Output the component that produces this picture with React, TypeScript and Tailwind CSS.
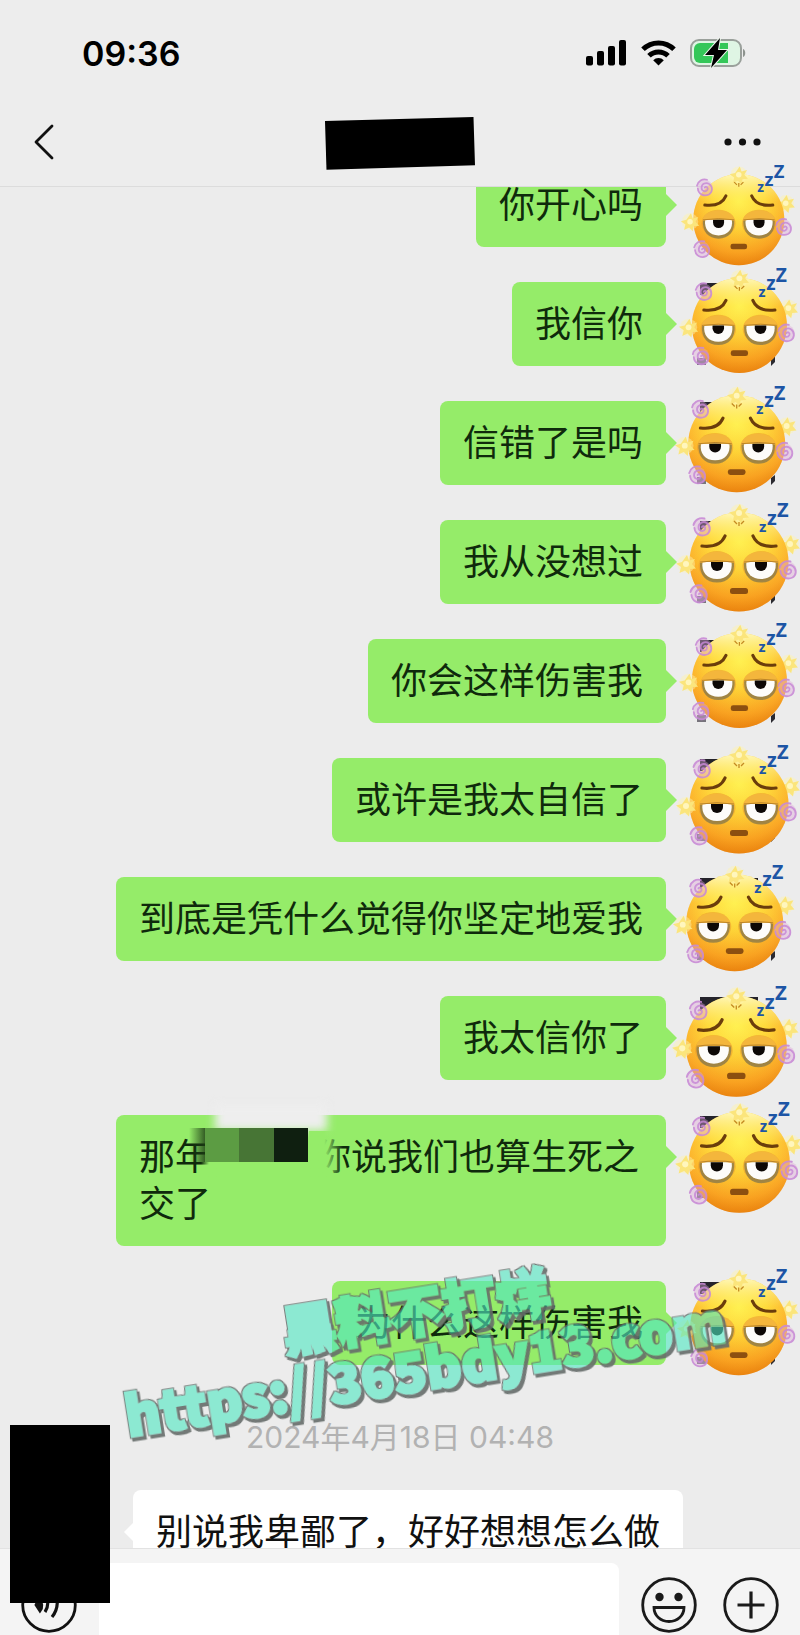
import React from "react";

type Message = { text: React.ReactNode; scrap: "none" | "corner" | "wide" };

const messages: Message[] = [
  { text: "你开心吗", scrap: "none" },
  { text: "我信你", scrap: "corner" },
  { text: "信错了是吗", scrap: "corner" },
  { text: "我从没想过", scrap: "corner" },
  { text: "你会这样伤害我", scrap: "corner" },
  { text: "或许是我太自信了", scrap: "corner" },
  { text: "到底是凭什么觉得你坚定地爱我", scrap: "wide" },
  { text: "我太信你了", scrap: "wide" },
  {
    text: (
      <>
        那年
        <Mosaic />
        你说我们也算生死之交了
      </>
    ),
    scrap: "corner",
  },
  { text: "为什么这样伤害我", scrap: "corner" },
];

// Centre (from the right and top edges) and face radius of each pasted sticker.
const stickers = [
  { right: 61, y: 220, r: 46 },
  { right: 61, y: 325, r: 48 },
  { right: 63, y: 444, r: 49 },
  { right: 61, y: 562, r: 50 },
  { right: 61, y: 680, r: 48 },
  { right: 61, y: 804, r: 50 },
  { right: 65, y: 923, r: 49 },
  { right: 64, y: 1046, r: 51 },
  { right: 61, y: 1162, r: 51 },
  { right: 61, y: 1327, r: 49 },
];

function Mosaic() {
  return (
    <span className="relative inline-block h-[34px] w-[104px] align-middle">
      <span className="absolute -top-[38px] left-[4px] h-[26px] w-[112px] bg-[#eeeeee] blur-[5px]" />
      <span className="absolute -left-[22px] -top-[15px] h-[34px] w-[16px] bg-linear-to-r from-transparent to-[#1c3a14]/80" />
      <span className="absolute -left-[10px] top-[19px] h-[16px] w-[16px] bg-linear-to-r from-transparent to-[#95ec69] to-50%" />
      <span className="absolute -left-[6px] -top-[15px] flex h-[34px] w-[103px]">
        <span className="flex-1 bg-[#5c9c43]" />
        <span className="flex-1 bg-[#477535]" />
        <span className="flex-1 bg-[#0f1f10]" />
      </span>
      <span className="absolute left-[98px] -top-[12px] h-[46px] w-[34px] bg-linear-to-r from-[#95ec69] from-45% to-transparent" />
    </span>
  );
}

function Spiral({ x, y }: { x: number; y: number }) {
  return (
    <g transform={`translate(${x} ${y})`} fill="none" stroke="#c98bd6" strokeWidth="1.9" strokeLinecap="round" opacity=".9">
      <circle r="8.500" fill="#dda9d8" fillOpacity=".45" stroke="none" />
      <path d="M0 0c1.500-2 4 0 3 2.200c-1.500 3-6.500 2-6.500-2c0-4.500 5-6.500 8.500-4c4 3 3.500 9-.5 11.300c-5 2.500-11.500 0-12-6.500" />
      <path d="M-8.500-2c1-5 6-8 11-6.500" />
    </g>
  );
}

function Star({ x, y }: { x: number; y: number }) {
  return (
    <g transform={`translate(${x} ${y})`}>
      <circle r="9" fill="#fff3b0" opacity=".45" />
      <path d="M1-9l2 5.500 6-1.500-3 5 4 4.500-6 .5-1 5.500-4-4-5.500 2.500 1.500-6-5-3.500 6-1.500z" fill="#fbe57c" />
      <circle r="3" fill="#fff6bd" />
    </g>
  );
}

function Eye({ x }: { x: number }) {
  return (
    <g transform={`translate(${x} 0)`}>
      <ellipse cy="4" rx="18.500" ry="15" fill="#e8962a" opacity=".5" />
      <path d="M-17 0h34c1 13-6 20.500-17 20.500S-18 13-17 0z" fill="#8b7a4a" opacity=".8" />
      <path d="M-14.500 0h29c1.500 10-4.500 17-14.500 17S-16 10-14.500 0z" fill="#fdfcfa" />
      <path d="M-6 0H6v3A6 6 0 0 1-6 3z" fill="#0d0806" />
      <path d="M-17.500 1C-16-14 16-14 17.500 1Q0-2.500-17.500 1z" fill="#f4b63c" />
      <path d="M-17 0Q0-2.500 17 0" stroke="#b98228" strokeWidth="1" fill="none" />
    </g>
  );
}

function TiredFace() {
  return (
    <svg viewBox="-65 -65 130 130" className="block size-full" aria-hidden="true">
      <Star x={51} y={-18} />
      <circle r="49.500" fill="url(#face)" />
      <circle r="49.500" fill="url(#shine)" />
      <Star x={0} y={-49} />
      <path d="M-5-41l3 3M5-41l-3 3M0-40v4" stroke="#c48a22" strokeWidth="1.300" />
      <Star x={-53} y={2} />
      <Spiral x={-37} y={-35} />
      <Spiral x={-40} y={32} />
      <Spiral x={49} y={8} />
      <path d="M-37-16Q-19-14-14-26M14-26Q19-14 37-16" fill="none" stroke="#6b3d0c" strokeWidth="3.200" strokeLinecap="round" />
      <Eye x={-22} />
      <Eye x={22} />
      <rect x="-9" y="26" width="18" height="6" rx="2.500" fill="#8c4f10" />
      <g fill="#1d55a5" className="font-['Open_Sans'] font-bold">
        <text x="20" y="-30" fontSize="15">z</text>
        <text x="28" y="-37" fontSize="20">z</text>
        <text x="38" y="-45" fontSize="20">Z</text>
      </g>
    </svg>
  );
}

function SharedDefs() {
  return (
    <svg className="absolute size-0" aria-hidden="true">
      <defs>
        <radialGradient id="face" cx=".5" cy=".3" r=".72">
          <stop offset="0" stopColor="#fff04a" />
          <stop offset=".4" stopColor="#ffd530" />
          <stop offset=".78" stopColor="#fba21e" />
          <stop offset="1" stopColor="#e57c0c" />
        </radialGradient>
        <linearGradient id="shine" x1="0" y1="0" x2="0" y2="1">
          <stop offset="0" stopColor="#fffbc8" stopOpacity=".9" />
          <stop offset=".3" stopColor="#fff27a" stopOpacity=".15" />
          <stop offset="1" stopColor="#f08a10" stopOpacity=".3" />
        </linearGradient>
        <filter id="stamp" x="-5%" y="-10%" width="110%" height="125%" colorInterpolationFilters="sRGB">
          <feMorphology in="SourceAlpha" operator="dilate" radius="1" result="fat" />
          <feOffset in="fat" dx="2" dy="3" result="moved" />
          <feMerge result="back">
            <feMergeNode in="fat" />
            <feMergeNode in="moved" />
          </feMerge>
          <feFlood floodColor="#666d6b" floodOpacity=".9" />
          <feComposite in2="back" operator="in" />
          <feComposite in2="SourceAlpha" operator="out" result="edge" />
          <feFlood floodColor="#50e6c1" floodOpacity=".62" />
          <feComposite in2="SourceAlpha" operator="in" result="body" />
          <feMerge>
            <feMergeNode in="edge" />
            <feMergeNode in="body" />
          </feMerge>
        </filter>
      </defs>
    </svg>
  );
}

function Avatar({ scrap }: { scrap: Message["scrap"] }) {
  return (
    <svg viewBox="0 0 84 84" className="size-[84px] shrink-0" aria-hidden="true">
      {scrap !== "none" && (
        <>
          <path d={scrap === "wide" ? "M5 1h58v14H5z" : "M5 1h20v12H5z"} fill="#24232b" />
          <path d="M2 76h9v7H2z" fill="#77747c" />
          <path d="M80 74v6l-4 4v-7z" fill="#2b2a30" />
        </>
      )}
    </svg>
  );
}

function StatusIcons() {
  return (
    <div className="flex items-center gap-[14px]">
      <svg width="41" height="26" viewBox="0 0 41 26" aria-hidden="true">
        <rect x="0" y="16" width="7" height="9.500" rx="2" />
        <rect x="11" y="11" width="7" height="14.500" rx="2" />
        <rect x="22" y="6" width="7" height="19.500" rx="2" />
        <rect x="33" y="0" width="7" height="25.500" rx="2" />
      </svg>
      <svg width="35" height="26" viewBox="0 0 35 26" aria-hidden="true">
        <g fill="none" stroke="#000" strokeWidth="5">
          <path d="M2 9.300a22 22 0 0 1 31 0" />
          <path d="M8 15.800a13.500 13.500 0 0 1 19 0" />
        </g>
        <path d="M17.500 25.500l-5.300-5.300a7.500 7.500 0 0 1 10.600 0z" />
      </svg>
      <svg width="56" height="30" viewBox="0 0 56 30" aria-hidden="true">
        <rect x="1" y="2" width="50" height="26" rx="8" fill="#dff5e4" stroke="#9aa09b" strokeWidth="2" />
        <path d="M10 5h28v20H10a6 6 0 0 1-6-6v-8a6 6 0 0 1 6-6z" fill="#34c759" />
        <path d="M53 11c3 1 3 7 0 8z" fill="#8d938e" />
        <path d="M30 0L15 17h9l-3 13 16-18h-9z" fill="#000" stroke="#eef8ee" strokeWidth="2" paintOrder="stroke" />
      </svg>
    </div>
  );
}

export default function App() {
  return (
    <div className="relative flex h-screen flex-col overflow-hidden bg-[#ececec] font-['Noto_Sans_CJK_SC',sans-serif] text-[#111]">
      <SharedDefs />

      <header className="h-[187px] shrink-0 border-b border-[#dcdcdc] bg-[#ededed]">
        <div className="flex h-[106px] items-center justify-between pl-[82px] pr-[54px]">
          <span className="font-['Inter',sans-serif] text-[34px] font-semibold text-black">09:36</span>
          <StatusIcons />
        </div>
        <div className="grid h-[72px] grid-cols-3 items-center px-9">
          <button type="button" aria-label="返回" className="w-5">
            <svg width="20" height="36" viewBox="2 0 20 36" overflow="visible" fill="none" stroke="#111" strokeWidth="2.800" strokeLinecap="round" strokeLinejoin="round">
              <path d="M18 2L2 18l16 16" />
            </svg>
          </button>
          <h1 className="h-[58px] w-[150px] justify-self-center bg-black [clip-path:polygon(0_14%,99%_7%,100%_90%,1%_98%)]" />
          <button type="button" aria-label="更多" className="justify-self-end">
            <svg width="40" height="10" viewBox="0 0 40 10" fill="#111">
              <circle cx="4" cy="5" r="3.600" />
              <circle cx="18.500" cy="5" r="3.600" />
              <circle cx="33" cy="5" r="3.600" />
            </svg>
          </button>
        </div>
      </header>

      <main className="min-h-0 flex-1 overflow-hidden">
        <div className="-mt-6 flex flex-col gap-[35px] text-[36px] leading-[47px]">
          {messages.map((m, i) => (
            <div key={i} className="flex items-start justify-end gap-[29px] pr-[21px]">
              <div className="relative max-w-[550px] rounded-lg bg-[#95ec69] px-[23px] pb-[21px] pt-4 text-[#0f2a0c]">
                <span className="absolute -right-[11px] top-[30px] h-6 w-3 bg-[#95ec69] [clip-path:polygon(0_0,100%_50%,0_100%)]" />
                {m.text}
              </div>
              <Avatar scrap={m.scrap} />
            </div>
          ))}
          <time className="block pt-5 text-center font-['Inter','Noto_Sans_CJK_SC',sans-serif] text-[30px] leading-[35px] text-[#b2b2b2]">
            2024年4月18日 04:48
          </time>
          <div className="flex pl-[133px]">
            <div className="relative rounded-lg bg-white px-[23px] pb-[21px] pt-4">
              <span className="absolute -left-[9px] top-[30px] h-6 w-3 bg-white [clip-path:polygon(100%_0,0_50%,100%_100%)]" />
              别说我卑鄙了，好好想想怎么做
            </div>
          </div>
        </div>
      </main>

      <footer className="h-[87px] shrink-0 overflow-hidden border-t border-[#e2e2e2] bg-[#f4f4f4] pt-[14px]">
        <div className="flex items-center gap-[22px] px-[21px]">
          <button type="button" aria-label="语音" className="shrink-0">
            <svg width="56" height="56" viewBox="0 0 56 56" fill="none" stroke="#111" strokeWidth="2.800">
              <circle cx="28" cy="28" r="26.300" />
              <path d="M18 22l-3 6 4 6a9 9 0 0 0-1-12z" fill="#111" />
              <path d="M24 17a16 16 0 0 1 0 18M32 12a23 23 0 0 1-1 28" strokeWidth="3.200" />
            </svg>
          </button>
          <input aria-label="输入消息" className="h-[84px] min-w-0 flex-1 rounded-lg bg-white px-4 outline-none" />
          <div className="flex shrink-0 gap-[26px]">
            <button type="button" aria-label="表情">
              <svg width="56" height="56" viewBox="0 0 56 56" fill="none" stroke="#1a1a1a" strokeWidth="2.800">
                <circle cx="28" cy="28" r="26.300" />
                <circle cx="18.500" cy="20" r="4.200" fill="#1a1a1a" stroke="none" />
                <circle cx="37.500" cy="20" r="4.200" fill="#1a1a1a" stroke="none" />
                <path d="M13 30.500h30c0 8-6.500 14-15 14s-15-6-15-14z" />
              </svg>
            </button>
            <button type="button" aria-label="更多功能">
              <svg width="56" height="56" viewBox="0 0 56 56" fill="none" stroke="#1a1a1a" strokeWidth="2.800">
                <circle cx="28" cy="28" r="26.300" />
                <path d="M28 14.500v27M14.500 28h27" strokeWidth="3.200" />
              </svg>
            </button>
          </div>
        </div>
      </footer>

      <div className="absolute bottom-8 left-[10px] h-[178px] w-[100px] bg-black" />

      {stickers.map((s) => (
        <div
          key={s.y}
          className="pointer-events-none absolute"
          style={{ right: s.right - s.r * 1.3, top: s.y - s.r * 1.3, width: s.r * 2.6, height: s.r * 2.6 }}
        >
          <TiredFace />
        </div>
      ))}

      <div className="pointer-events-none absolute left-[110px] top-[1280px] w-[620px] -rotate-[9deg] whitespace-nowrap text-center text-[54px] font-black leading-[58px] text-black [-webkit-text-stroke:3px_black] [filter:url(#stamp)]">
        <p>黑料不打烊</p>
        <p>https://365bdy13.com</p>
      </div>
    </div>
  );
}
